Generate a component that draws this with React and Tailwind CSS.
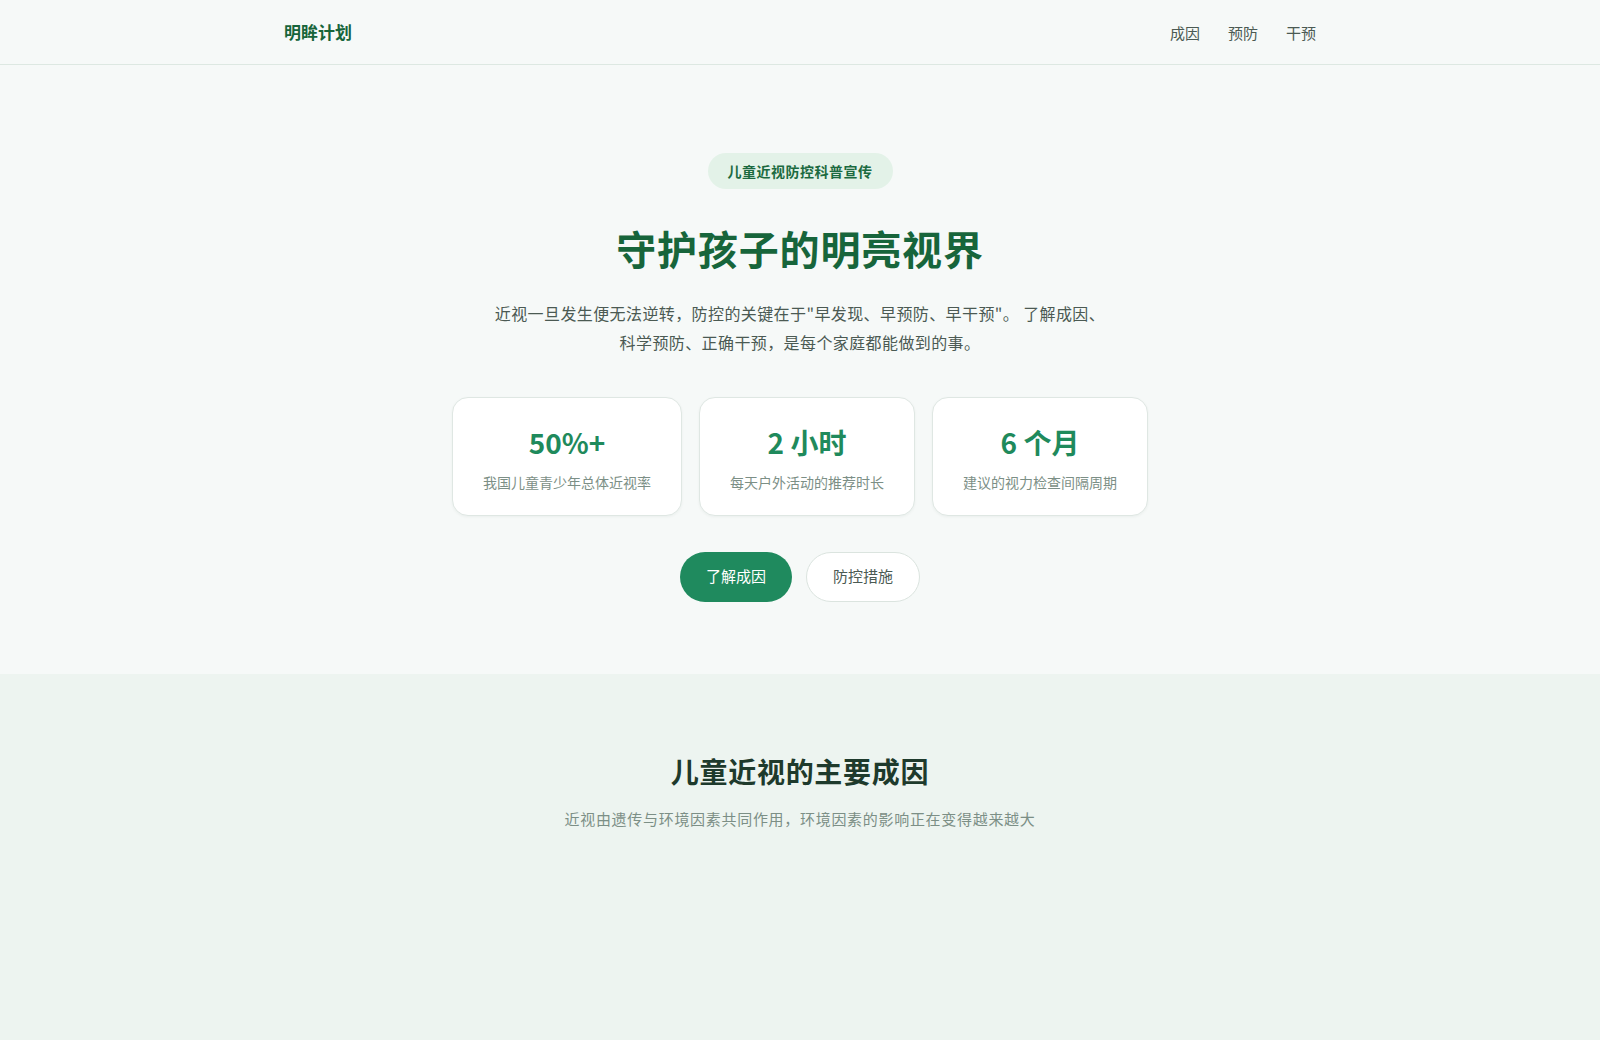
import React from 'react';

const stats = [
  { value: '50%+', label: '我国儿童青少年总体近视率' },
  { value: '2 小时', label: '每天户外活动的推荐时长' },
  { value: '6 个月', label: '建议的视力检查间隔周期' },
];

const navItems = ['成因', '预防', '干预'];

const App = () => {
  return (
    <div
      className="min-h-screen flex flex-col bg-[#f6f9f8]"
      style={{ fontFamily: '"Noto Sans CJK SC", "Noto Sans", sans-serif' }}
    >
      {/* Header */}
      <header className="h-[65px] border-b border-[#dde8e2] bg-[#f6f9f8]">
        <div className="max-w-[1080px] mx-auto px-6 h-full flex items-center justify-between">
          <div className="text-[17px] font-bold text-[#17653b]">明眸计划</div>
          <nav className="flex items-center gap-7 pt-[2px]">
            {navItems.map((item) => (
              <a key={item} href="#" className="text-[15px] text-[#4b5a53]">
                {item}
              </a>
            ))}
          </nav>
        </div>
      </header>

      {/* Hero */}
      <section className="pt-[88px] pb-[72px] flex flex-col items-center text-center">
        <span className="inline-block px-5 py-2 rounded-full bg-[#e3f2e8] text-sm leading-5 font-semibold tracking-[0.5px] text-[#1b6a40]">
          儿童近视防控科普宣传
        </span>
        <h1 className="mt-[33px] text-[40px] leading-[52px] font-bold text-[#17653b] tracking-[0.85px]">
          守护孩子的明亮视界
        </h1>
        <p className="mt-[25px] max-w-[620px] text-base leading-[1.8] tracking-[0.4px] text-[#4b5a53]">
          近视一旦发生便无法逆转，防控的关键在于"早发现、早预防、早干预"。 了解成因、科学预防、正确干预，是每个家庭都能做到的事。
        </p>

        <div className="mt-[40px] flex gap-[17px]">
          {stats.map((s) => (
            <div
              key={s.value}
              className="bg-white border border-[#dfe7e3] rounded-2xl px-[30px] pt-[23px] pb-[23px] shadow-[0_1px_3px_rgba(20,60,40,0.05)]"
            >
              <div className="text-[28px] leading-[42px] font-bold text-[#1f8a5c]">{s.value}</div>
              <div className="mt-[9px] text-sm leading-5 text-[#7c8f86]">{s.label}</div>
            </div>
          ))}
        </div>

        <div className="mt-[36px] flex gap-[14px]">
          <button className="h-[50px] px-[26px] rounded-full bg-[#1f8a5e] text-white text-[15px]">
            了解成因
          </button>
          <button className="h-[50px] px-[26px] rounded-full bg-white border border-[#dbe4df] text-[#4b5a53] text-[15px]">
            防控措施
          </button>
        </div>
      </section>

      {/* Causes */}
      <section className="flex-1 bg-[#edf4f0] pt-[79px] pb-20 flex flex-col items-center text-center">
        <h2 className="text-[28px] leading-9 font-bold tracking-[0.7px] text-[#1e3a2c]">儿童近视的主要成因</h2>
        <p className="mt-[18px] text-[15px] leading-6 tracking-[0.7px] text-[#7c8f86]">
          近视由遗传与环境因素共同作用，环境因素的影响正在变得越来越大
        </p>
      </section>
    </div>
  );
};

export default App;
